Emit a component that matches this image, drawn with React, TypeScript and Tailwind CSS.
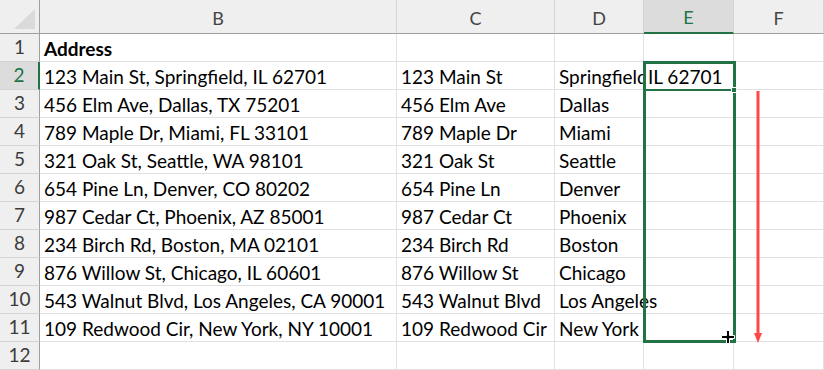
import React from "react";

const columns = [
  { key: "B", width: "w-[357px]" },
  { key: "C", width: "w-[158px]" },
  { key: "D", width: "w-[89px]" },
  { key: "E", width: "w-[90px]" },
  { key: "F", width: "w-[90px]" },
];

const rows: string[][] = [
  ["Address", "", "", "", ""],
  ["123 Main St, Springfield, IL 62701", "123 Main St", "Springfield", "IL 62701", ""],
  ["456 Elm Ave, Dallas, TX 75201", "456 Elm Ave", "Dallas", "", ""],
  ["789 Maple Dr, Miami, FL 33101", "789 Maple Dr", "Miami", "", ""],
  ["321 Oak St, Seattle, WA 98101", "321 Oak St", "Seattle", "", ""],
  ["654 Pine Ln, Denver, CO 80202", "654 Pine Ln", "Denver", "", ""],
  ["987 Cedar Ct, Phoenix, AZ 85001", "987 Cedar Ct", "Phoenix", "", ""],
  ["234 Birch Rd, Boston, MA 02101", "234 Birch Rd", "Boston", "", ""],
  ["876 Willow St, Chicago, IL 60601", "876 Willow St", "Chicago", "", ""],
  ["543 Walnut Blvd, Los Angeles, CA 90001", "543 Walnut Blvd", "Los Angeles", "", ""],
  ["109 Redwood Cir, New York, NY 10001", "109 Redwood Cir", "New York", "", ""],
  ["", "", "", "", ""],
];

const font = { fontFamily: "Lato, 'Open Sans', sans-serif" };

function ColumnHeader({ label, width, active }: { label: string; width: string; active: boolean }) {
  return (
    <div
      className={`${width} flex h-[34px] shrink-0 items-end justify-center border-r border-[#d4d4d4] pb-[6px] text-[18px] leading-none ${
        active ? "border-b-2 border-b-[#217346] bg-[#dcdcdc] text-[#217346]" : "border-b border-b-[#9f9f9f] bg-[#efefef] text-[#444]"
      }`}
    >
      {label}
    </div>
  );
}

export default function App() {
  return (
    <div className="relative h-[370px] w-[824px] overflow-hidden bg-white" style={font}>
      {/* header row */}
      <div className="flex">
        <div className="flex h-[34px] w-[40px] shrink-0 items-end justify-end border-r border-b border-[#9f9f9f] bg-[#efefef] pb-[4px] pr-[4px]">
          <svg width="21" height="20" viewBox="0 0 21 20">
            <polygon points="21,0 21,20 0,20" fill="#dadada" />
          </svg>
        </div>
        {columns.map((c) => (
          <ColumnHeader key={c.key} label={c.key} width={c.width} active={c.key === "E"} />
        ))}
      </div>

      {rows.map((row, r) => {
        const n = r + 1;
        const activeRow = n === 2;
        return (
          <div key={n} className="flex">
            <div
              className={`flex h-[28px] w-[40px] shrink-0 items-end justify-center border-b border-b-[#d4d4d4] pb-[5px] text-[19px] leading-none ${
                activeRow ? "border-r-2 border-r-[#217346] bg-[#dcdcdc] text-[#217346]" : "border-r border-r-[#9f9f9f] bg-[#efefef] text-[#3c3c3c]"
              }`}
            >
              {n}
            </div>
            {columns.map((c, i) => {
              const text = row[i];
              const clip = n === 2 && c.key === "D";
              return (
                <div
                  key={c.key}
                  className={`${c.width} flex h-[28px] shrink-0 items-end whitespace-nowrap border-r border-b border-[#e1e1e1] pl-[4px] pb-0 text-[19px] leading-[1.2] text-black ${
                    clip ? "overflow-hidden" : "overflow-visible"
                  } ${n === 1 ? "font-bold" : ""} ${c.key === "E" ? "pl-[3px]" : ""}`}
                >
                  {text}
                </div>
              );
            })}
          </div>
        );
      })}

      {/* selection E2:E11 */}
      <div className="pointer-events-none absolute left-[643px] top-[61px] h-[282px] w-[93px] border-[3px] border-[#217346]" />
      <div className="pointer-events-none absolute left-[643px] top-[89px] h-[2px] w-[90px] bg-[#217346]" />
      <div className="pointer-events-none absolute left-[731px] top-[87px] h-[6px] w-[6px] border border-white bg-[#217346]" />

      {/* red arrow */}
      <svg className="pointer-events-none absolute left-[751px] top-[90px]" width="14" height="254" viewBox="0 0 14 254">
        <rect x="5.5" y="1" width="3" height="244" fill="#ff4747" />
        <polygon points="3,243 11,243 7,253" fill="#ff4747" />
      </svg>

      {/* fill cursor */}
      <svg className="pointer-events-none absolute left-[719px] top-[328px]" width="18" height="18" viewBox="0 0 18 18">
        <path d="M7.5 2.5h3v5h5v3h-5v5h-3v-5h-5v-3h5z" fill="#000" stroke="#fff" strokeWidth="1" />
      </svg>
    </div>
  );
}
